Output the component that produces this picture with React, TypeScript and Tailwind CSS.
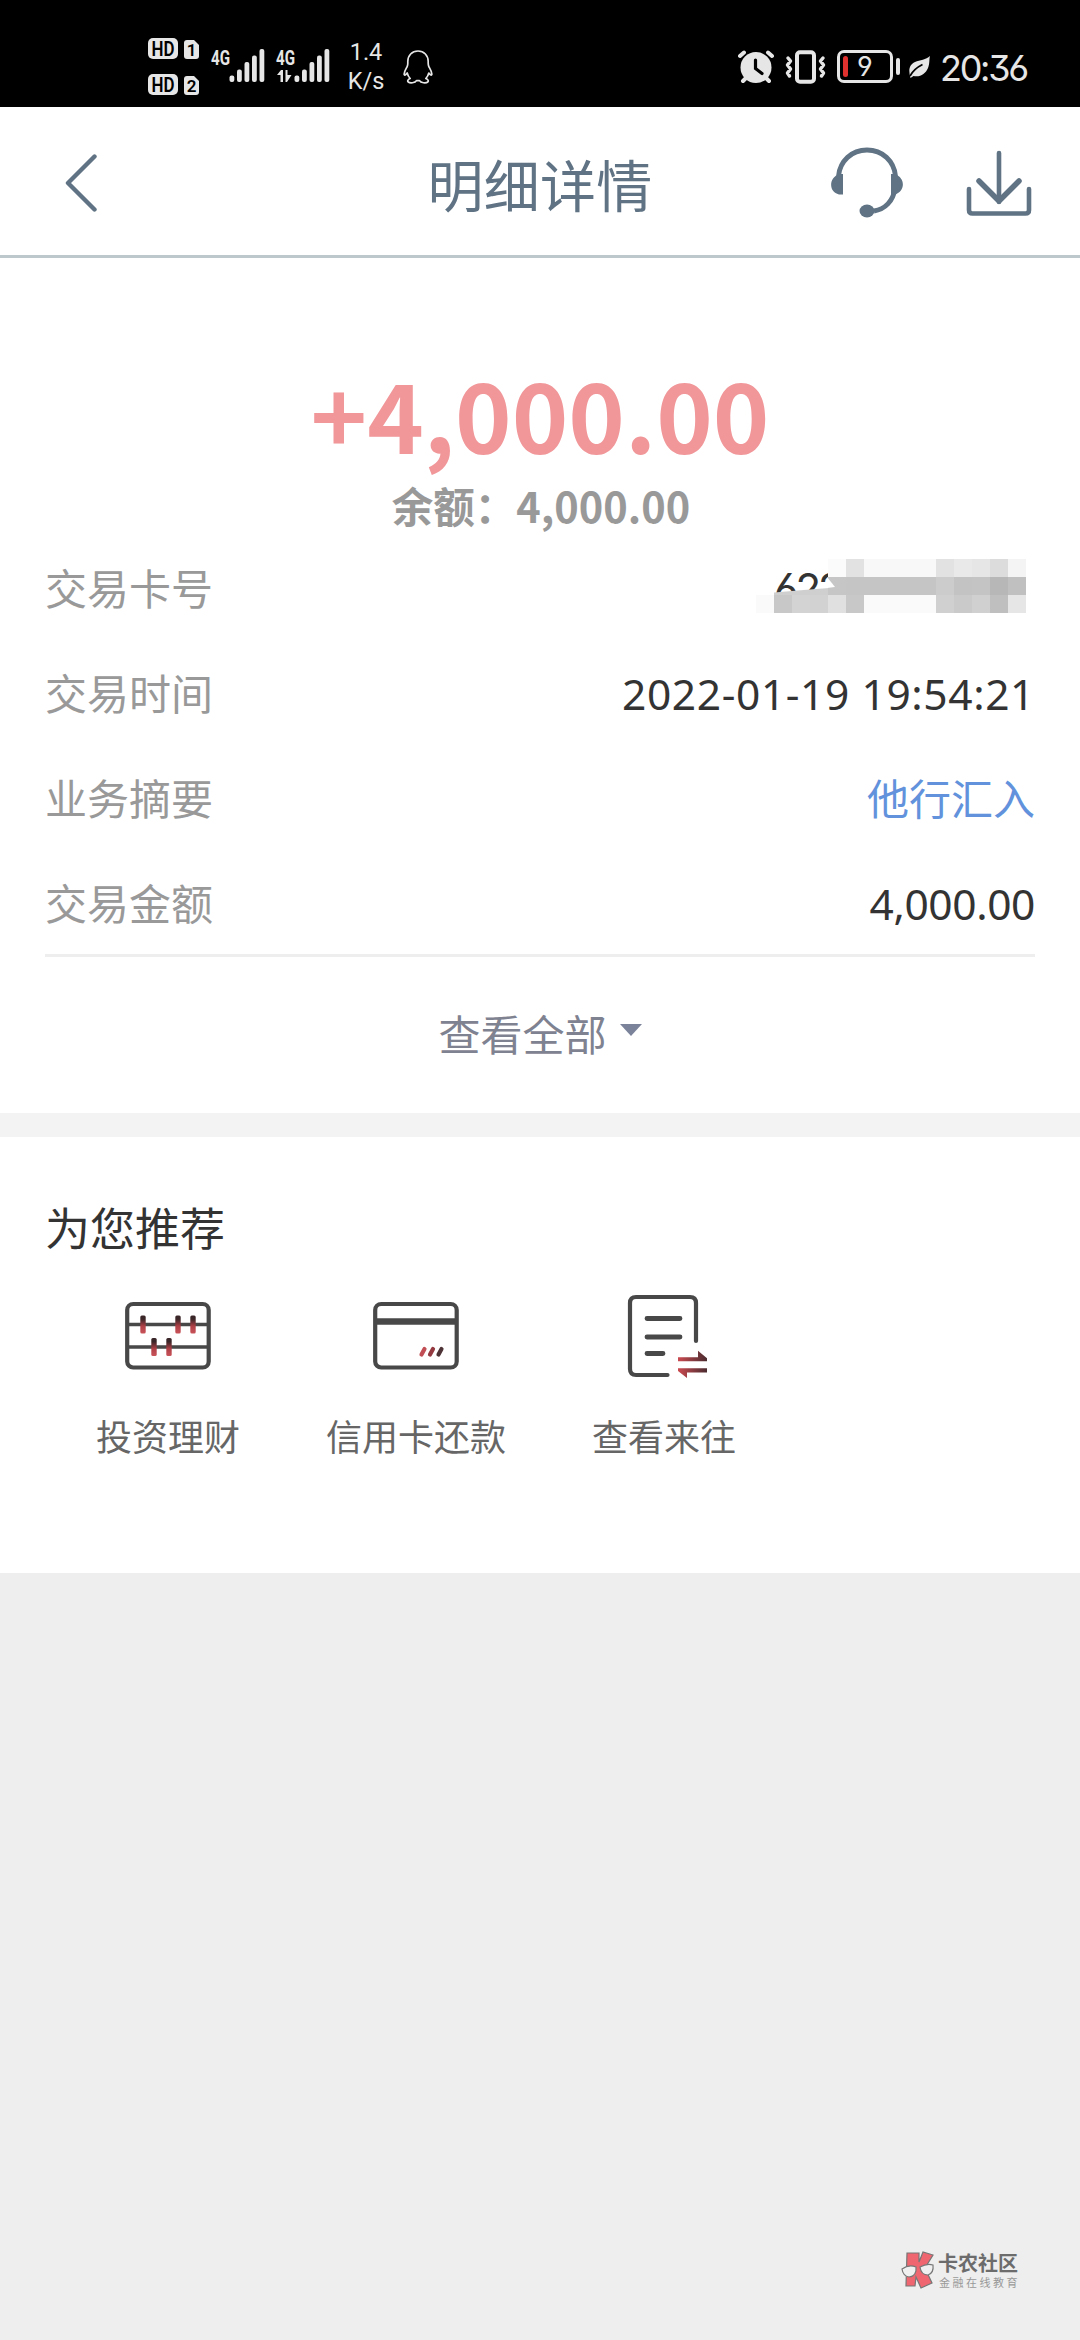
import React from 'react';

const CJK = "font-['Noto_Sans_CJK_SC',sans-serif]";
const NUM = "font-['Noto_Sans','Noto_Sans_CJK_SC',sans-serif]";
const CLOCK = "font-['Inter',sans-serif] [font-feature-settings:'ss01']";

const HdBadge: React.FC<{ sim: string }> = ({ sim }) => (
    <svg className="overflow-visible" width="52" height="21" viewBox="0 0 52 21" fontFamily="Roboto" fontWeight="600">
        <rect width="30" height="21" rx="5" fill="#e6e6e6" />
        <path d="M39 2h7l5 5v11q0 3-3 3h-9q-3 0-3-3V5q0-3 3-3z" fill="#e6e6e6" />
        <text x="3.500" y="17.500" fontSize="20" textLength="23" lengthAdjust="spacingAndGlyphs">HD</text>
        <text x="43.500" y="18" fontSize="17" textAnchor="middle">{sim}</text>
    </svg>
);

const Signal: React.FC<{ data?: boolean }> = ({ data }) => (
    <svg className="overflow-visible" width="54" height="34" viewBox="0 0 54 34" fill="#e6e6e6">
        <text x="0" y="15.500" fontFamily="Roboto" fontWeight="700" fontSize="21" textLength="19" lengthAdjust="spacingAndGlyphs">4G</text>
        {data && <path d="M1 26l4-5h2v12H4.500v-7zM9.500 21h2v5h4l-4.500 7h-1.500z" />}
        <rect x="18.500" y="26.500" width="4.800" height="6.500" rx="2" />
        <rect x="26" y="20.500" width="4.800" height="12.500" rx="2" />
        <rect x="33.500" y="13" width="4.800" height="20" rx="2" />
        <rect x="41" y="6.500" width="4.800" height="26.500" rx="2" />
        <rect x="48.500" y="0" width="4.800" height="33" rx="2" />
    </svg>
);

const Penguin = () => (
    <svg width="30" height="34" viewBox="0 0 30 34" fill="none" stroke="#e6e6e6" strokeWidth="1.700" strokeLinejoin="round">
        <path d="M15 1C9 1 4.800 5.500 4.800 11.500c0 2.500.2 3.500-.6 5C2.500 19.500.8 22 1.200 24.500c.5 1.500 2-.2 3-1.500.5 2.200 1.500 4 3 5.500-2 .8-3.200 2.300-2 3.500 1.800 1.400 7 1 8.300-1.300h3c1.300 2.300 6.500 2.700 8.300 1.300 1.200-1.200 0-2.700-2-3.500 1.500-1.500 2.500-3.300 3-5.500 1 1.300 2.500 3 3 1.500.4-2.500-1.300-5-3-8-.8-1.500-.6-2.500-.6-5C25.200 5.500 21 1 15 1z" />
    </svg>
);

const Alarm = () => (
    <svg width="36" height="34" viewBox="0 0 36 34" fill="none" stroke="#e6e6e6" strokeLinecap="round">
        <circle cx="18" cy="17.500" r="15.500" fill="#e6e6e6" stroke="none" />
        <path d="M2 6l4-3.500M34 6l-4-3.500M5 31l3-3M31 31l-3-3" strokeWidth="4" />
        <path d="M17.500 10v8.500l6.500 5" stroke="#000" strokeWidth="3.200" />
    </svg>
);

const Vibrate = () => (
    <svg width="41" height="34" viewBox="0 0 41 34" fill="none" stroke="#e6e6e6" strokeWidth="4" strokeLinejoin="round" strokeLinecap="round">
        <rect x="12" y="2.200" width="17" height="29.500" rx="3" />
        <path d="M3 8l2.500 3-3 4 3 4-3 4 2 3M38 8l-2.500 3 3 4-3 4 3 4-2 3" strokeWidth="3.500" />
    </svg>
);

const StatusBar = () => (
    <header className="flex h-[107px] shrink-0 items-start bg-black pl-[148px] pr-[50px] pt-[38px] text-[#e6e6e6]">
        <div className="flex flex-col gap-[15px]">
            <HdBadge sim="1" />
            <HdBadge sim="2" />
        </div>
        <div className="ml-[11px] mt-[11px] flex gap-[11px]">
            <Signal />
            <Signal data />
        </div>
        <div className="ml-[15px] w-[42px] text-center font-['Roboto',sans-serif] text-[23.5px] leading-[28.5px]">
            <div>1.4</div>
            <div>K/s</div>
        </div>
        <div className="ml-[16px] mt-[12px]"><Penguin /></div>
        <div className="ml-auto mt-[12px] flex items-start">
            <Alarm />
            <div className="ml-[11px]"><Vibrate /></div>
            <div className="ml-[11px] flex h-[33px] w-[56px] items-center rounded-[7px] border-[3px] border-[#e6e6e6] pl-[3px]">
                <span className="h-[21px] w-[5px] rounded-full bg-[#e0312f]" />
                <span className={`${CLOCK} ml-[9px] text-[27px] leading-none`}>9</span>
            </div>
            <span className="ml-[3px] mt-[8px] h-[17px] w-[4px] rounded-full bg-[#e6e6e6]" />
            <svg className="ml-[9px] mt-[6px]" width="22" height="22" viewBox="0 0 22 22">
                <path d="M21 0c-1 3 0 7-2 12-2.500 6-8 9.500-14.500 8L1.500 22C-.5 15-.5 9 6 6c5-2.300 11-2 15-6z" fill="#e6e6e6" />
                <path d="M1 20c3-5.500 6.500-8.500 12.500-11.500" stroke="#000" strokeWidth="1.800" fill="none" />
            </svg>
            <span className={`${CLOCK} ml-[9px] mt-[-2px] w-[90px] whitespace-nowrap text-[36px] leading-[40px] tracking-[-2.300px]`}>20:36</span>
        </div>
    </header>
);

const TitleBar = () => (
    <nav className="grid h-[151px] shrink-0 grid-cols-[1fr_auto_1fr] items-center border-b-[3px] border-[#bcc8cc] bg-white pt-[4px] text-[#5f7384]">
        <svg className="ml-[65px]" width="32" height="58" viewBox="0 0 32 58" fill="none" stroke="currentColor" strokeWidth="4.400" strokeLinecap="round" strokeLinejoin="round">
            <path d="M29.500 2.500L3 29l26.500 26.500" />
        </svg>
        <h1 className={`${CJK} text-[56px] leading-[60px] tracking-[0.3px]`}>明细详情</h1>
        <div className="flex items-center justify-end pr-[48px]">
            <svg width="74" height="72" viewBox="0 0 74 72" fill="none" stroke="currentColor">
                <path d="M8.500 29C10 14 21.500 3 37 3s27 11 28.500 26M65 42c-2 12-10 20.500-21 22" strokeWidth="4.800" />
                <path d="M13 27H9C-1.500 31-1.500 45 9 47.500h4zM61 27h4c10.500 4 10.500 17 0 20.500h-4z" fill="currentColor" stroke="none" />
                <ellipse cx="37" cy="64" rx="7.500" ry="6.500" fill="currentColor" stroke="none" />
            </svg>
            <svg className="ml-[62px]" width="66" height="66" viewBox="0 0 66 66" fill="none" stroke="currentColor" strokeWidth="4.600" strokeLinecap="round" strokeLinejoin="round">
                <path d="M3 39v21q0 3.500 3.500 3.500h53q3.500 0 3.500-3.500V39M33 3v49" />
                <path d="M13 31l20 20 20-20" strokeWidth="5.500" />
            </svg>
        </div>
    </nav>
);

// 18px blocks hiding the digits of the card number, one array per block row
const mosaic: string[][] = [
    ['', '', '', '', '#fbfbfb', '#e2e2e2', '#f8f8f8', '#f8f8f8', '#f8f8f8', '#f8f8f8', '#e2e2e2', '#e9e9e9', '#e6e6e6', '#dcdcdc', '#f4f4f4'],
    ['', '', '', '', '#c6c6c6', '#c5c5c5', '#c5c5c5', '#c5c5c5', '#c5c5c5', '#c5c5c5', '#cccccc', '#c3c3c3', '#c4c4c4', '#b7b7b7', '#c0c0c0'],
    ['#fafafa', '#c8c8c8', '#d3d3d3', '#d2d2d2', '#e0e0e0', '#c8c8c8', '#fafafa', '#fafafa', '#fafafa', '#fafafa', '#d0d0d0', '#cacaca', '#d0d0d0', '#bfbfbf', '#e6e6e6'],
];

const MaskedCard = () => (
    <div className={`${CLOCK} relative w-[261px] pt-[5px] text-[42px] leading-[54px] tracking-[-3px] text-[#333]`}>
        622
        <svg className="absolute left-[-18px] top-[2px]" width="270" height="54" viewBox="0 0 270 54">
            <path d="M18 33.500l36-3 19-1.500v8H18z" fill="#cfcfcf" />
            <g shapeRendering="crispEdges">
                {mosaic.map((row, y) =>
                    row.map((fill, x) => fill && <rect key={`${x}-${y}`} x={x * 18} y={y * 18} width="18" height="18" fill={fill} />),
                )}
            </g>
            <path d="M71 18l8 10-8 1z" fill="#fff" />
        </svg>
    </div>
);

const Row: React.FC<{ label: string; children: React.ReactNode }> = ({ label, children }) => (
    <div className="flex h-[105px] items-center justify-between">
        <span className={`${CJK} text-[42px] leading-[60px] text-[#999]`}>{label}</span>
        {children}
    </div>
);

const Detail = () => (
    <section className="flex h-[855px] shrink-0 flex-col bg-white px-[45px]">
        <div className={`${CJK} mt-[106px] text-center text-[96px] font-bold leading-[98px] text-[#f19699]`}>+4,000.00</div>
        <div className={`${CJK} mt-[15px] pl-[2px] text-center text-[41.5px] font-bold leading-[57px] text-[#999]`}>余额：4,000.00</div>
        <Row label="交易卡号"><MaskedCard /></Row>
        <Row label="交易时间">
            <span className={`${NUM} mt-[4px] text-[42.5px] leading-[60px] tracking-[0.600px] text-[#333]`}>2022-01-19 19:54:21</span>
        </Row>
        <Row label="业务摘要">
            <span className={`${CJK} text-[42px] leading-[60px] text-[#6292dc]`}>他行汇入</span>
        </Row>
        <Row label="交易金额">
            <span className={`${NUM} mt-[4px] text-[42.5px] leading-[60px] tracking-[-0.400px] text-[#333]`}>4,000.00</span>
        </Row>
        <div className="border-t-[3px] border-[#eee]" />
        <button className={`${CJK} mt-[46px] flex items-center justify-center text-[42px] leading-[60px] text-[#7f8290]`}>
            查看全部
            <svg className="mb-[7px] ml-[13px]" width="22" height="12" viewBox="0 0 22 12"><path d="M0 0h22L11 12z" fill="#7b839b" /></svg>
        </button>
    </section>
);

const Bead: React.FC<{ x: number; y: number }> = ({ x, y }) => (
    <rect x={x - 2.7} y={y} width="5.400" height="18" rx="1.500" fill="url(#bead)" />
);

const AbacusIcon = () => (
    <svg width="86" height="84" viewBox="0 0 86 84" fill="none" stroke="#484848" strokeWidth="4.200">
        <defs>
            <linearGradient id="bead" x1="0" y1="0" x2="0" y2="1">
                <stop offset="0.200" stopColor="#3a2528" />
                <stop offset="0.600" stopColor="#b04046" />
                <stop offset="1" stopColor="#c9545a" />
            </linearGradient>
        </defs>
        <rect x="2.200" y="10" width="81.500" height="63.500" rx="6" />
        <path d="M2 30.500h82M2 53h82" strokeWidth="3.600" />
        <g stroke="none">
            <Bead x={18} y={21.500} />
            <Bead x={53} y={21.500} />
            <Bead x={68} y={21.500} />
            <Bead x={29} y={44} />
            <Bead x={44} y={44} />
        </g>
    </svg>
);

const CardIcon = () => (
    <svg width="86" height="84" viewBox="0 0 86 84" fill="none" stroke="#484848" strokeWidth="4.200" strokeLinecap="round">
        <rect x="2.200" y="10" width="81.500" height="63.500" rx="6" />
        <path d="M4 27.500h78" strokeWidth="6.500" strokeLinecap="butt" />
        <path d="M48.500 60.500l3-5.500" stroke="#c14e54" />
        <path d="M57 60.500l3-5.500" stroke="#93393f" />
        <path d="M65.500 60.500l3-5.500" stroke="#4d3336" />
    </svg>
);

const RecordIcon = () => (
    <svg width="86" height="84" viewBox="0 0 86 84" fill="none" stroke="#484848" strokeWidth="4.200" strokeLinecap="round">
        <defs>
            <linearGradient id="swap" gradientUnits="userSpaceOnUse" x1="57" y1="0" x2="86" y2="0">
                <stop offset="0" stopColor="#cb4a50" />
                <stop offset="1" stopColor="#4a2c30" />
            </linearGradient>
        </defs>
        <path d="M46.500 81H15q-6 0-6-6V9q0-6 6-6h54q6 0 6 6v38" />
        <path d="M26 24.500h33M26 43h33M26 59.500h16" strokeWidth="4.800" />
        <path d="M57 63.200h20v-6.500l9 7.500v3H57zM86 78.500H66V84l-9-7v-2.800h29z" fill="url(#swap)" stroke="none" />
    </svg>
);

const shortcuts = [
    { name: '投资理财', icon: <AbacusIcon /> },
    { name: '信用卡还款', icon: <CardIcon /> },
    { name: '查看来往', icon: <RecordIcon /> },
];

const Recommend = () => (
    <section className="h-[436px] shrink-0 bg-white px-[44px] pt-[59px]">
        <h2 className={`${CJK} pl-px text-[45px] leading-[62px] text-[#333]`}>为您推荐</h2>
        <div className="mt-[36px] grid grid-cols-4">
            {shortcuts.map(s => (
                <div key={s.name} className="flex flex-col items-center">
                    {s.icon}
                    <span className={`${CJK} mt-[32px] text-[36px] leading-[50px] text-[#666]`}>{s.name}</span>
                </div>
            ))}
        </div>
    </section>
);

const Watermark = () => (
    <div className="mb-[51px] ml-auto mr-[60px] mt-auto flex items-center gap-[3px]">
        <svg width="34" height="38" viewBox="0 0 34 38" stroke="#777" strokeWidth="1.200">
            <path d="M6 2h12v9l4-10 10 3-8 13 7 15-11 5-5-11-1 9H5z" fill="#ef6570" />
            <path d="M1 18q7-5 14-2 1 9-7 10-6-1-7-8zM19 16q7-4 13-2 1 8-5 10-7 0-8-8z" fill="#f0f0f0" />
        </svg>
        <div className={`${CJK} text-[#6c6c6c]`}>
            <div className="text-[20px] font-bold leading-[22px]">卡农社区</div>
            <div className="ml-[1px] mt-[1px] whitespace-nowrap text-[11px] leading-[14px] tracking-[2.500px] text-[#999]">金融在线教育</div>
        </div>
    </div>
);

export default function App() {
    return (
        <div className="flex h-[2340px] w-[1080px] flex-col overflow-hidden bg-[#eee]">
            <StatusBar />
            <TitleBar />
            <Detail />
            <div className="h-[24px] shrink-0 bg-[#f3f3f3]" />
            <Recommend />
            <Watermark />
        </div>
    );
}
